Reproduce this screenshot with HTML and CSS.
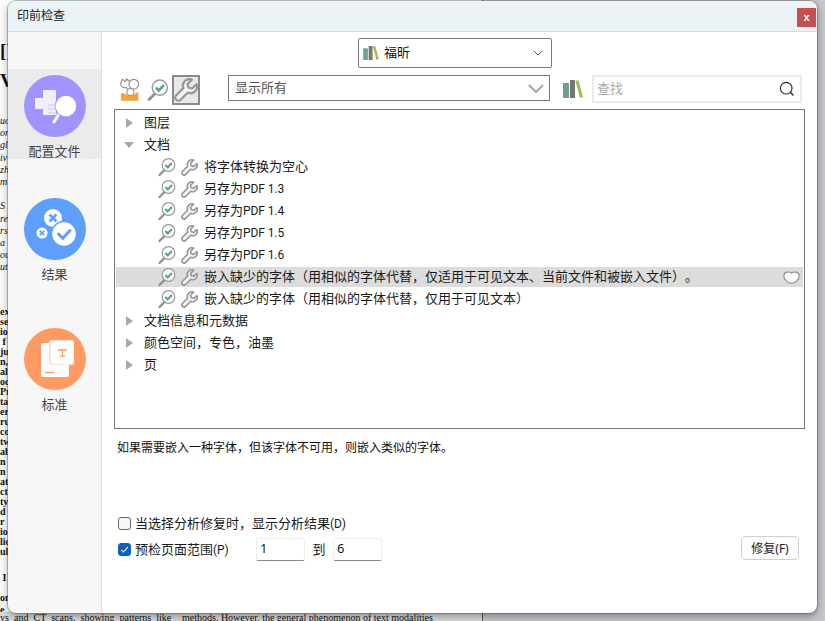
FILE: index.html
```html
<!DOCTYPE html>
<html lang="zh-CN">
<head>
<meta charset="utf-8">
<title>印前检查</title>
<link rel="stylesheet" href="styles.css">
</head>
<body>
<svg class="defs" width="0" height="0" aria-hidden="true">
  <defs>
    <symbol id="lens" viewBox="0 0 20 20">
      <path d="M7 13.500 2.500 18" fill="none" stroke="#8f8f8f" stroke-width="2.300" stroke-linecap="round"/>
      <circle cx="11.500" cy="8" r="6.300" fill="#fff" stroke="#9a9a9a" stroke-width="1.200"/>
      <path d="M8.300 8 10.700 10.400 14.900 5.900" fill="none" stroke="#55a78c" stroke-width="2.200"/>
    </symbol>
    <symbol id="wrench" viewBox="0 0 16 16">
      <path d="M15 4.200 12.100 7 9.700 6.400 9 4 11.900 1.100A4.300 4.300 0 0 0 6.300 6.700L1.500 11.500A2 2 0 0 0 4.400 14.500L9.200 9.700A4.300 4.300 0 0 0 15 4.200Z" fill="#f4f4f4" stroke="#969696" stroke-width="1.500" stroke-linejoin="round"/>
    </symbol>
    <symbol id="books" viewBox="0 0 20 18">
      <rect x="0" y="3" width="6" height="15" fill="#6f9f92"/>
      <rect x="7" y="0" width="5" height="18" fill="#757575"/>
      <path d="M12.500 1 15.500 0 20 17 17 18Z" fill="#9cc04a"/>
    </symbol>
  </defs>
</svg>

<div class="desktop">
  <div class="doc-left">
    <div class="big">[]</div>
    <div class="big">V</div>
    <div class="para-a">
      <div>uc</div><div>on</div><div>gl</div><div>iv</div><div>zh</div><div>m</div><div>&nbsp;</div>
      <div>S</div><div>re</div><div>rs</div><div>a</div><div>ou,</div><div>ut.</div>
    </div>
    <div class="para-b">
      <div>ex</div><div>se</div><div>io</div><div>&nbsp;f</div><div>ju</div><div>n,</div><div>al-</div><div>oc</div><div>Pr</div><div>ta</div><div>er</div><div>ru</div><div>co</div>
      <div>tw</div><div>ab</div><div>n i</div><div>n I</div><div>at</div><div>ct</div><div>ty</div><div>d</div><div>r</div><div>ior</div><div>lic</div><div>ul</div>
      <div class="head-i">&nbsp;I</div>
      <div class="head-on">on</div>
      <div class="head-e">e</div>
    </div>
  </div>
  <div class="doc-bottom">
    <span class="col-a">ys and CT scans, showing patterns like</span>
    <span class="col-b">methods. However, the general phenomenon of text modalities</span>
  </div>

  <div class="window">
    <header class="titlebar">
      <span class="title">印前检查</span>
      <button class="close">x</button>
    </header>
    <div class="body">
      <aside class="sidebar">
        <div class="side-item selected">
          <svg class="circle" viewBox="0 0 62 62">
            <circle cx="31" cy="31" r="31" fill="#9f94fe"/>
            <path d="M19 15H32V40H19V34H11V23H19Z" fill="#fff" fill-opacity=".85"/>
            <path d="M24 30H33M24 34H33M24 38H33" stroke="#d9d5ff" stroke-width="1.500"/>
            <path d="M35 39 30 47" stroke="#fff" stroke-width="3" stroke-linecap="round"/>
            <circle cx="42" cy="31" r="11.500" fill="#9f94fe" fill-opacity=".6"/>
            <circle cx="42" cy="31" r="10.300" fill="#fff"/>
          </svg>
          <span class="side-label">配置文件</span>
        </div>
        <div class="side-item">
          <svg class="circle" viewBox="0 0 62 62">
            <circle cx="31" cy="31" r="31" fill="#5e9ffb"/>
            <circle cx="29" cy="20" r="9" fill="#fff"/>
            <path d="M25.500 16.500 32.500 23.500M32.500 16.500 25.500 23.500" stroke="#5e9ffb" stroke-width="2.600"/>
            <circle cx="18" cy="35" r="5.500" fill="#fff"/>
            <path d="M15.800 32.800 20.200 37.200M20.200 32.800 15.800 37.200" stroke="#5e9ffb" stroke-width="1.800"/>
            <circle cx="40" cy="36" r="12.500" fill="#fff" stroke="#5e9ffb" stroke-width="1.500"/>
            <path d="M34.500 36 38.800 40.300 46 32.500" fill="none" stroke="#5e9ffb" stroke-width="3" stroke-linecap="round"/>
          </svg>
          <span class="side-label">结果</span>
        </div>
        <div class="side-item last">
          <svg class="circle" viewBox="0 0 62 62">
            <circle cx="31" cy="31" r="31" fill="#ff9b62"/>
            <rect x="17" y="15" width="28" height="34" rx="2" fill="#fff"/>
            <rect x="25" y="12" width="25" height="25" rx="2.500" fill="#f7e6d6"/>
            <rect x="27" y="13" width="23" height="23" rx="2" fill="#fff"/>
            <path d="M34 22H43M38.500 22V27M36 28H41" stroke="#ff9b62" stroke-width="1.300" fill="none"/>
            <path d="M21 44.500H30" stroke="#ff9b62" stroke-width="1.300"/>
          </svg>
          <span class="side-label">标准</span>
        </div>
      </aside>

      <main class="main">
        <div class="vendor">
          <svg class="vendor-books"><use href="#books"/></svg>
          <span class="vendor-name">福昕</span>
          <svg class="vendor-chev" viewBox="0 0 10 6"><path d="M1 1 5 5 9 1" fill="none" stroke="#555" stroke-width="1"/></svg>
        </div>

        <div class="toolbar">
          <span class="tool">
            <svg class="tool-svg first" viewBox="0 0 24 28">
              <path d="M5 18H1V27H22V16L19 18L15 21L10 21Z" fill="#f0a43a"/>
              <path d="M3 1 6 4 8.500 2 7 0.800A5 5 0 0 1 11.500 7L16 14 13 19 7.500 11A5 5 0 0 1 1 5Z" fill="#fff" stroke="#8c8c8c" stroke-width="1.300" stroke-linejoin="round"/>
              <circle cx="16.500" cy="7" r="5.800" fill="#fff" stroke="#8c8c8c" stroke-width="1.300"/>
              <circle cx="12.500" cy="16.500" r="4.300" fill="#fff" stroke="#8c8c8c" stroke-width="1.300"/>
            </svg>
          </span>
          <span class="tool">
            <svg class="tool-svg"><use href="#lens"/></svg>
          </span>
          <span class="tool active">
            <svg class="tool-svg"><use href="#wrench"/></svg>
          </span>
          <div class="filter">
            <span>显示所有</span>
            <svg class="filter-chev" viewBox="0 0 16 9"><path d="M1 1 8 8 15 1" fill="none" stroke="#ababab" stroke-width="2.200"/></svg>
          </div>
          <svg class="bar-books"><use href="#books"/></svg>
          <div class="search">
            <span class="placeholder">查找</span>
            <svg class="search-icon" viewBox="0 0 16 16"><circle cx="7.200" cy="7.200" r="5.800" fill="none" stroke="#333" stroke-width="1.200"/><path d="M11.300 11.300 14.500 14.500" stroke="#333" stroke-width="1.400"/></svg>
          </div>
        </div>

        <div class="tree">
          <div class="row"><i class="arrow right"></i><span>图层</span></div>
          <div class="row"><i class="arrow down"></i><span>文档</span></div>
          <div class="row leaf"><svg class="lens"><use href="#lens"/></svg><svg class="wr"><use href="#wrench"/></svg><span>将字体转换为空心</span></div>
          <div class="row leaf"><svg class="lens"><use href="#lens"/></svg><svg class="wr"><use href="#wrench"/></svg><span>另存为<b class="lat">PDF 1.3</b></span></div>
          <div class="row leaf"><svg class="lens"><use href="#lens"/></svg><svg class="wr"><use href="#wrench"/></svg><span>另存为<b class="lat">PDF 1.4</b></span></div>
          <div class="row leaf"><svg class="lens"><use href="#lens"/></svg><svg class="wr"><use href="#wrench"/></svg><span>另存为<b class="lat">PDF 1.5</b></span></div>
          <div class="row leaf"><svg class="lens"><use href="#lens"/></svg><svg class="wr"><use href="#wrench"/></svg><span>另存为<b class="lat">PDF 1.6</b></span></div>
          <div class="row leaf current"><svg class="lens"><use href="#lens"/></svg><svg class="wr"><use href="#wrench"/></svg><span>嵌入缺少的字体（用相似的字体代替，仅适用于可见文本、当前文件和被嵌入文件）。</span>
            <svg class="heart" viewBox="0 0 17 13"><path d="M8.500 2.200C6.500.4 1 .3.800 4.800.7 8.500 5 12.300 8.500 12.300S16.300 8.500 16.200 4.800C16 .3 10.500.4 8.500 2.200Z" fill="#fff" stroke="#8c8c8c" stroke-width="1.100"/></svg>
          </div>
          <div class="row leaf"><svg class="lens"><use href="#lens"/></svg><svg class="wr"><use href="#wrench"/></svg><span>嵌入缺少的字体（用相似的字体代替，仅用于可见文本）</span></div>
          <div class="row"><i class="arrow right"></i><span>文档信息和元数据</span></div>
          <div class="row"><i class="arrow right"></i><span>颜色空间，专色，油墨</span></div>
          <div class="row"><i class="arrow right"></i><span>页</span></div>
        </div>

        <p class="desc">如果需要嵌入一种字体，但该字体不可用，则嵌入类似的字体。</p>

        <div class="opt">
          <span class="check"></span>
          <span class="opt-text">当选择分析修复时，显示分析结果<b class="lat">(D)</b></span>
        </div>
        <div class="opt range">
          <span class="check on"><svg viewBox="0 0 13 13"><path d="M3.300 6.800 5.500 9 9.800 4.200" fill="none" stroke="#fff" stroke-width="1.100"/></svg></span>
          <span class="range-label opt-text">预检页面范围<b class="lat">(P)</b></span>
          <span class="num">1</span>
          <span class="to opt-text">到</span>
          <span class="num">6</span>
          <button class="fix">修复(F)</button>
        </div>
      </main>
    </div>
  </div>
</div>
</body>
</html>
```
FILE: styles.css
```css
* { box-sizing: border-box; }
html, body { margin: 0; padding: 0; }
body {
  width: 825px;
  height: 621px;
  overflow: hidden;
  font-family: "Noto Sans", "Noto Sans CJK SC", sans-serif;
  font-size: 13px;
  color: #1a1a1a;
  text-spacing-trim: space-all;
}
.defs { position: absolute; }
.lat {
  font-family: Roboto, sans-serif;
  font-size: 12px;
  font-weight: normal;
  letter-spacing: -0.1px;
}
.desktop {
  position: relative;
  width: 825px;
  height: 621px;
  overflow: hidden;
  background: linear-gradient(90deg, #fff 0, #fff 482px, #555 482px, #555 483px, #c6c6cb 483px);
}

/* document behind the dialog */
.doc-left {
  position: absolute;
  left: 0;
  top: 36px;
  width: 8px;
  overflow: hidden;
  font-family: "Liberation Serif", serif;
  color: #111;
  white-space: nowrap;
}
.big { font-size: 19px; line-height: 30px; font-weight: bold; }
.para-a { margin-top: 19px; font-size: 10px; line-height: 12.2px; font-style: italic; }
.para-b { margin-top: 33px; font-size: 10px; line-height: 10px; font-weight: bold; }
.head-i { margin-top: 16px; }
.head-on { margin-top: 10px; }
.head-e { margin-top: 2px; }
.doc-bottom {
  position: absolute;
  left: 0;
  top: 612px;
  width: 482px;
  height: 9px;
  font-family: "Liberation Serif", serif;
  font-size: 10px;
  line-height: 11px;
  color: #111;
  white-space: nowrap;
  display: flex;
  background: #dadada;
}
.col-a { width: 182px; word-spacing: 2.6px; }

/* dialog */
.window {
  position: absolute;
  left: 8px;
  top: 1px;
  width: 809px;
  height: 612px;
  background: #fff;
  border-radius: 8px;
  overflow: hidden;
  display: flex;
  flex-direction: column;
  box-shadow: 0 0 0 1px rgba(90, 90, 90, .35);
}
.desktop::after {
  content: "";
  position: absolute;
  left: 8px;
  top: 1px;
  width: 809px;
  height: 612px;
  border-radius: 8px;
  box-shadow: 0 3px 9px rgba(0, 0, 0, .38);
  pointer-events: none;
}
.titlebar {
  flex: none;
  height: 31px;
  background: #ecf3f7;
  border-bottom: 1px solid #d6dadc;
  padding: 0 1px 0 9px;
  display: flex;
  align-items: center;
  justify-content: space-between;
}
.title { font-size: 12px; margin-bottom: 2px; }
.close {
  width: 19px;
  height: 19px;
  margin-top: 3px;
  padding: 0;
  border: 0;
  background: #c65050;
  color: #fff;
  font: bold 11px/17px "Liberation Sans", sans-serif;
}
.body { flex: 1; display: flex; min-height: 0; }

/* sidebar */
.sidebar {
  flex: none;
  width: 94px;
  background: #f7f7f7;
  border-right: 1px solid #dedede;
  padding-top: 37px;
  display: flex;
  flex-direction: column;
  gap: 33px;
}
.side-item {
  height: 90px;
  padding-top: 6px;
  display: flex;
  flex-direction: column;
  align-items: center;
}
.side-item.selected { background: #ebebeb; }
.side-item.last { margin-top: 7px; }
.circle { width: 62px; height: 62px; flex: none; }
.side-label { margin-top: 4px; line-height: 20px; color: #444; }

/* main column */
.main {
  flex: 1;
  min-width: 0;
  padding: 6px 12px 0;
  display: flex;
  flex-direction: column;
}
.vendor {
  flex: none;
  width: 194px;
  height: 30px;
  margin-left: 244px;
  border: 1px solid #7a7a7a;
  border-radius: 2px;
  padding: 0 8px 0 4px;
  display: flex;
  align-items: center;
}
.vendor-books { width: 16px; height: 14px; }
.vendor-name { margin: 0 0 4px 5px; color: #111; }
.vendor-chev { width: 10px; height: 6px; margin-left: auto; }

.toolbar {
  flex: none;
  height: 30px;
  margin-top: 7px;
  display: flex;
  align-items: flex-start;
}
.tool {
  width: 28px;
  height: 30px;
  display: flex;
  align-items: center;
  justify-content: center;
  border: 2px solid transparent;
}
.tool:first-child { margin-left: 2px; }
.tool.active { background: #e8e8e8; border-color: #8a8a8a; }
.tool-svg { width: 24px; height: 24px; flex: none; }
.tool-svg.first { width: 20px; height: 24px; }
.filter {
  width: 322px;
  height: 26px;
  margin-left: 28px;
  border: 1px solid #777;
  padding: 0 5px 0 6px;
  display: flex;
  align-items: center;
  justify-content: space-between;
  color: #555;
}
.filter > span { margin-bottom: 4px; }
.filter-chev { width: 16px; height: 9px; }
.bar-books { width: 20px; height: 18px; margin: 5px 0 0 13px; }
.search {
  width: 210px;
  height: 28px;
  margin-left: 9px;
  border: 2px solid #ebebeb;
  padding: 0 5px 0 3px;
  display: flex;
  align-items: center;
  justify-content: space-between;
}
.placeholder { color: #aaa; margin-bottom: 4px; }
.search-icon { width: 16px; height: 16px; }

.tree {
  flex: none;
  height: 320px;
  margin-top: 4px;
  border: 1px solid #77777c;
  padding: 2px 1px 0;
}
.row {
  height: 22px;
  padding-left: 10px;
  display: flex;
  align-items: center;
  white-space: nowrap;
}
.row > span { margin-bottom: 3px; }
.row.leaf { padding-left: 41px; }
.row.leaf > span { margin-left: 6px; }
.row.current { background: linear-gradient(#fff 1px, #dcdcdc 1px, #dcdcdc 21px, #fff 21px); padding-right: 3px; }
.arrow { width: 10px; height: 10px; flex: none; display: block; }
.arrow.right {
  border-left: 7px solid #a8a8a8;
  border-top: 5px solid transparent;
  border-bottom: 5px solid transparent;
  margin-right: 8px;
}
.arrow.down {
  width: 10px;
  height: 6px;
  border-top: 6px solid #a8a8a8;
  border-left: 5px solid transparent;
  border-right: 5px solid transparent;
  margin-left: -2px;
  margin-right: 10px;
}
.lens { width: 20px; height: 20px; flex: none; }
.wr { width: 17px; height: 17px; flex: none; margin-left: 4px; }
.heart { width: 17px; height: 13px; margin-left: auto; }

.desc {
  margin: 10px 0 0 3px;
  font-size: 12px;
  line-height: 18px;
  color: #111;
}
.opt {
  flex: none;
  height: 20px;
  margin-top: 56px;
  padding-left: 4px;
  display: flex;
  align-items: center;
}
.opt-text { margin-bottom: 2px; }
.opt.range { height: 24px; margin-top: 4px; }
.check {
  width: 13px;
  height: 13px;
  margin-right: 4px;
  flex: none;
  background: #f6f6f6;
  border: 1px solid #666;
  border-radius: 3px;
}
.check svg { display: block; width: 13px; height: 13px; margin: -1px; }
.check.on { background: #0f62b8; border-color: #0f62b8; }
.range-label { width: 121px; }
.num {
  width: 49px;
  height: 23px;
  background: #fff;
  border: 1px solid #ededed;
  border-bottom: 1px solid #8a8a8a;
  border-radius: 2px;
  padding-left: 3px;
  line-height: 19px;
}
.to { width: 28px; text-align: center; }
.fix {
  width: 58px;
  height: 24px;
  margin: -2px 6px 0 auto;
  padding: 0;
  background: #fdfdfd;
  border: 1px solid #cfcfcf;
  border-radius: 4px;
  font: 12px "Noto Sans", "Noto Sans CJK SC", sans-serif;
  color: #222;
}
```
